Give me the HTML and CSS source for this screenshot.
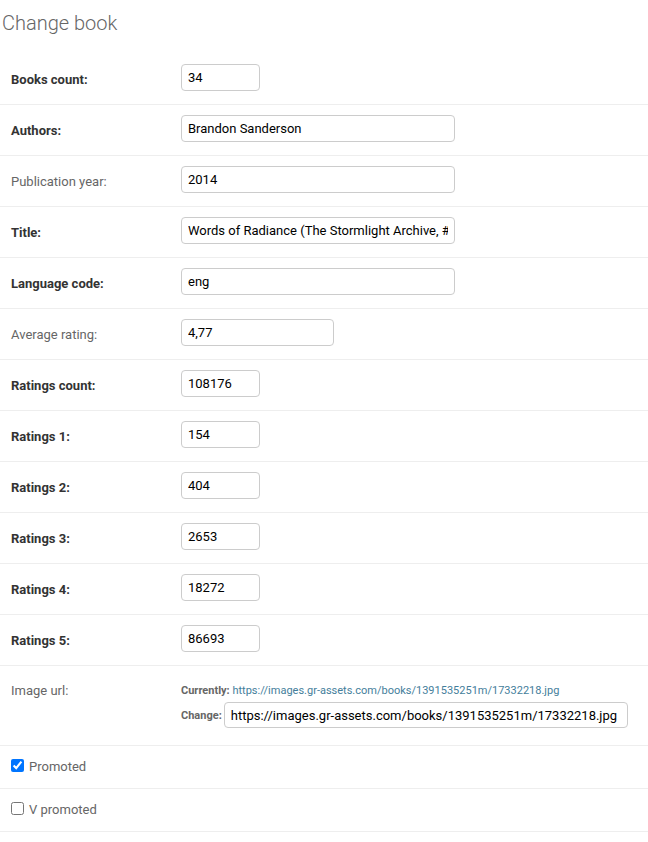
FILE: index.html
```html
<!DOCTYPE html>
<html>
<head>
<meta charset="utf-8">
<link rel="stylesheet" href="styles.css">
</head>
<body>
<div class="content">
  <h1>Change book</h1>
  <form>
    <div class="form-row">
      <label class="required">Books count:</label>
      <input class="in in-small" type="text" value="34">
    </div>
    <div class="form-row">
      <label class="required">Authors:</label>
      <input class="in in-text" type="text" value="Brandon Sanderson">
    </div>
    <div class="form-row">
      <label>Publication year:</label>
      <input class="in in-text" type="text" value="2014">
    </div>
    <div class="form-row">
      <label class="required">Title:</label>
      <input class="in in-text" type="text" value="Words of Radiance (The Stormlight Archive, #2)">
    </div>
    <div class="form-row">
      <label class="required">Language code:</label>
      <input class="in in-text" type="text" value="eng">
    </div>
    <div class="form-row">
      <label>Average rating:</label>
      <input class="in in-decimal" type="text" value="4,77">
    </div>
    <div class="form-row">
      <label class="required">Ratings count:</label>
      <input class="in in-small" type="text" value="108176">
    </div>
    <div class="form-row">
      <label class="required">Ratings 1:</label>
      <input class="in in-small" type="text" value="154">
    </div>
    <div class="form-row">
      <label class="required">Ratings 2:</label>
      <input class="in in-small" type="text" value="404">
    </div>
    <div class="form-row">
      <label class="required">Ratings 3:</label>
      <input class="in in-small" type="text" value="2653">
    </div>
    <div class="form-row">
      <label class="required">Ratings 4:</label>
      <input class="in in-small" type="text" value="18272">
    </div>
    <div class="form-row">
      <label class="required">Ratings 5:</label>
      <input class="in in-small" type="text" value="86693">
    </div>
    <div class="form-row file-row">
      <label>Image url:</label>
      <div class="file-upload">
        <p class="current"><strong>Currently:</strong> <a href="#">https://images.gr-assets.com/books/1391535251m/17332218.jpg</a></p>
        <div class="change"><strong>Change:</strong> <input class="in in-url" type="text" value="https://images.gr-assets.com/books/1391535251m/17332218.jpg"></div>
      </div>
    </div>
    <div class="form-row check-row">
      <input type="checkbox" class="cb" checked>
      <label class="cb-label">Promoted</label>
    </div>
    <div class="form-row check-row">
      <input type="checkbox" class="cb">
      <label class="cb-label">V promoted</label>
    </div>
  </form>
</div>
</body>
</html>
```

FILE: styles.css
```css
html, body {
  margin: 0;
  padding: 0;
  background: #fff;
}
body {
  font-family: Roboto, "Liberation Sans", sans-serif;
  color: #333;
  font-size: 13px;
}
.content {
  padding: 11px 0 0 0;
}
h1 {
  margin: 0 0 19px 0;
  padding-left: 2px;
  font-size: 20px;
  line-height: 24px;
  font-weight: 300;
  color: #666;
}
form {
  margin: 0;
}
.form-row {
  display: flex;
  align-items: flex-start;
  padding: 10px 10px 13px 11px;
  border-bottom: 1px solid #eee;
}
.form-row > label {
  flex: 0 0 auto;
  width: 160px;
  padding: 6px 10px 0 0;
  line-height: 20px;
  color: #666;
  font-size: 13px;
}
.form-row > label.required {
  color: #333;
  font-weight: 700;
}
.in {
  box-sizing: border-box;
  height: 27px;
  margin: 0;
  padding: 5px 6px;
  border: 1px solid #ccc;
  border-radius: 4px;
  font-family: Roboto, "Liberation Sans", sans-serif;
  font-size: 13px;
  color: #000;
  background: #fff;
  outline: none;
}
.in-small { width: 79px; }
.in-text { width: 274px; }
.in-decimal { width: 153px; }
.file-row {
  padding: 10px 10px 17px 11px;
}
.form-row.file-row > label {
  padding-top: 5px;
}
.file-upload {
  display: flex;
  flex-direction: column;
}
.current {
  margin: 5px 0 0 0;
  line-height: 20px;
  font-size: 11px;
  color: #666;
}
.current strong, .change strong {
  font-weight: 700;
  color: #666;
  font-size: 11px;
}
.current a {
  color: #447e9b;
  text-decoration: none;
}
.change {
  display: flex;
  align-items: center;
  gap: 2px;
  margin-top: 1px;
}
.in-url {
  width: 404px;
  height: 26px;
  margin: 0;
  font-size: 13px;
  padding: 3px 6px;
}
.check-row {
  align-items: flex-start;
  padding: 10px 10px 12px 11px;
  height: 20px;
}
.cb {
  margin: 3px 5px 0 0;
  width: 13px;
  height: 13px;
}
.form-row > label.cb-label {
  width: auto;
  padding: 1px 0 0 0;
  color: #666;
  font-size: 13px;
  line-height: 20px;
}
```
